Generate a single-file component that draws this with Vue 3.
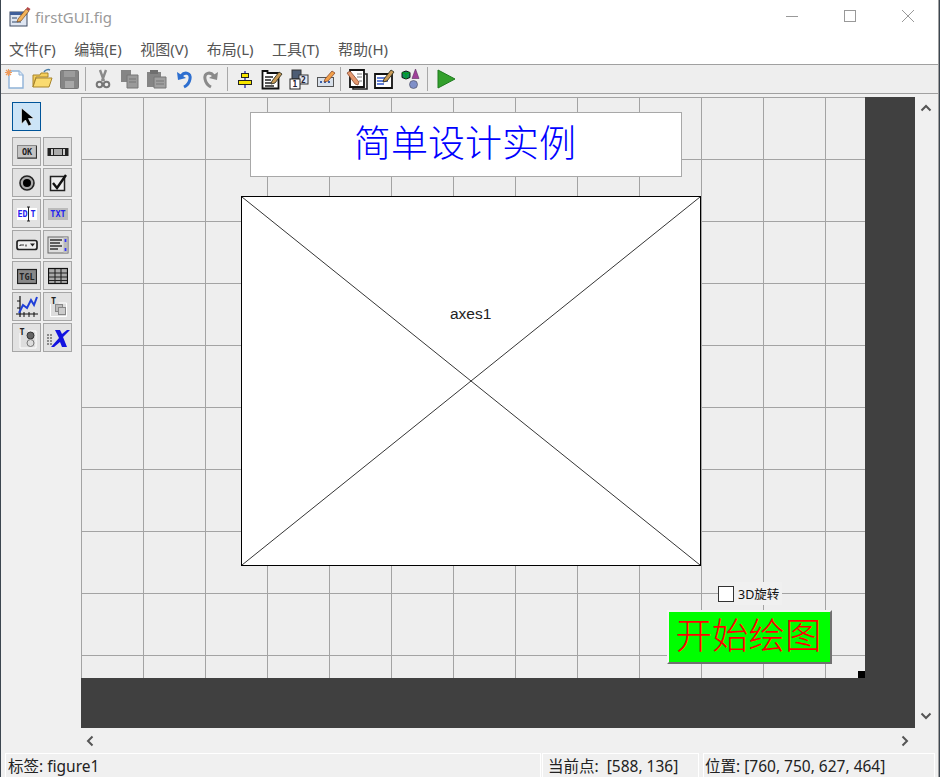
<template>
  <div class="window">
    <div class="titlebar">
      <svg class="app-icon" width="22" height="22" viewBox="0 0 22 22">
        <rect x="1" y="6" width="17" height="14" fill="#dfe6f2" stroke="#3d4a63" />
        <rect x="1" y="6" width="17" height="3" fill="#3f5f9a" />
        <rect x="3" y="11" width="5" height="2" fill="#8796ad" />
        <rect x="3" y="15" width="9" height="2" fill="#8796ad" />
        <path d="M9 13l8-10 3 2-8 10-4 1z" fill="#f2b35a" stroke="#7a4a20" stroke-width="0.7" />
        <path d="M17 3l1.500-2 3 2-1.500 2z" fill="#b5484a" />
      </svg>
      <span class="title">firstGUI.fig</span>
      <div class="win-buttons">
        <svg width="14" height="14" viewBox="0 0 14 14"><path d="M1 7.500h12" stroke="#999" /></svg>
        <svg width="14" height="14" viewBox="0 0 14 14"><rect x="1.500" y="1.500" width="11" height="11" fill="none" stroke="#999" /></svg>
        <svg width="14" height="14" viewBox="0 0 14 14"><path d="M1 1l12 12M13 1L1 13" stroke="#999" /></svg>
      </div>
    </div>

    <div class="menubar">
      <span v-for="m in menus" :key="m">{{ m }}</span>
    </div>

    <div class="toolbar">
      <div class="tool"><svg width="22" height="22" viewBox="0 0 22 22">
        <path d="M5 3h10l4 4v13H5z" fill="#fff" stroke="#8fb2d8" stroke-width="1.400" />
        <path d="M15 3v4h4" fill="#dbe8f5" stroke="#8fb2d8" />
        <path d="M4.500 1v7M1 4.500h7M2 2l5 5M7 2L2 7" stroke="#ef9a5a" stroke-width="1.200" />
      </svg></div>
      <div class="tool"><svg width="22" height="22" viewBox="0 0 22 22">
        <path d="M2 7h7l1-2h7v4H5l-3 10z" fill="#f5cf5c" stroke="#a8842a" />
        <path d="M2 19l3-9h16l-3 9z" fill="#fadb70" stroke="#a8842a" />
        <path d="M13 4c1-2 4-3 6-2" fill="none" stroke="#4a7ea8" stroke-width="1.500" />
      </svg></div>
      <div class="tool"><svg width="22" height="22" viewBox="0 0 22 22">
        <rect x="2.500" y="2.500" width="18" height="18" rx="1" fill="#858585" stroke="#777" />
        <rect x="6" y="3" width="11" height="6" fill="#9c9c9c" />
        <rect x="7" y="13" width="9" height="7" fill="#a8a8a8" />
      </svg></div>
      <div class="tool-sep"></div>
      <div class="tool"><svg width="22" height="22" viewBox="0 0 22 22">
        <path d="M8 2l4 11M14 2l-4 11" stroke="#8a8a8a" stroke-width="2.400" />
        <circle cx="7.500" cy="16.500" r="2.800" fill="none" stroke="#777" stroke-width="2" />
        <circle cx="14.500" cy="16.500" r="2.800" fill="none" stroke="#777" stroke-width="2" />
      </svg></div>
      <div class="tool"><svg width="22" height="22" viewBox="0 0 22 22">
        <path d="M2 2h10v12H2z" fill="#858585" />
        <path d="M8 7h11v13H8z" fill="#9a9a9a" stroke="#777" />
        <path d="M10 11h7M10 14h7" stroke="#777" />
      </svg></div>
      <div class="tool"><svg width="22" height="22" viewBox="0 0 22 22">
        <path d="M1 4h14v15H1z" fill="#858585" />
        <rect x="4" y="2" width="8" height="4" fill="#6f6f6f" />
        <path d="M8 9h12v11H8z" fill="#a0a0a0" stroke="#777" />
        <path d="M10 13h8M10 16h8" stroke="#777" />
      </svg></div>
      <div class="tool"><svg width="22" height="22" viewBox="0 0 22 22">
        <path d="M8 8c4-5 10-3 9 3-.5 3-2 6-6 8" fill="none" stroke="#2d6fd0" stroke-width="3" />
        <path d="M4 4l1 8 8-2z" fill="#2d6fd0" />
      </svg></div>
      <div class="tool"><svg width="22" height="22" viewBox="0 0 22 22">
        <path d="M14 8c-4-5-10-3-9 3 .5 3 2 6 6 8" fill="none" stroke="#8a8a8a" stroke-width="3" />
        <path d="M18 4l-1 8-8-2z" fill="#8a8a8a" />
      </svg></div>
      <div class="tool-sep"></div>
      <div class="tool"><svg width="22" height="22" viewBox="0 0 22 22">
        <path d="M11 3v17" stroke="#2222aa" stroke-width="1.300" />
        <rect x="7.500" y="5.500" width="7" height="4" fill="#f5e400" stroke="#222" />
        <rect x="4.500" y="12.500" width="13" height="4" fill="#f5e400" stroke="#222" />
      </svg></div>
      <div class="tool"><svg width="22" height="22" viewBox="0 0 22 22">
        <path d="M1.500 3h5v2h11v15.500h-16z" fill="#fff" stroke="#111" stroke-width="1.800" />
        <path d="M4 9h8M4 12h6M4 15h6M4 18h9" stroke="#222" stroke-width="1.500" />
        <path d="M11 13l7-9 3 2-7 9-4 1z" fill="#c99a55" stroke="#332" stroke-width="0.900" />
      </svg></div>
      <div class="tool"><svg width="22" height="22" viewBox="0 0 22 22">
        <rect x="4" y="2" width="9" height="9" fill="#4d5d74" stroke="#333" />
        <rect x="11" y="7" width="9" height="9" fill="#dfe6f4" stroke="#333" />
        <rect x="2" y="11" width="10" height="10" fill="#fff" stroke="#222" />
        <text x="7" y="19" class="tiny-num">1</text>
        <text x="15.500" y="14.500" class="tiny-num">2</text>
      </svg></div>
      <div class="tool"><svg width="22" height="22" viewBox="0 0 22 22">
        <rect x="2.500" y="9.500" width="16" height="9" fill="#d8e0ea" stroke="#555" />
        <path d="M5 14h2M9 14h2M13 14h2" stroke="#3a60a8" stroke-width="2" />
        <path d="M10 11l7-8 3 2-7 8-4 1z" fill="#f2a04a" stroke="#7a3a20" stroke-width="0.700" />
      </svg></div>
      <div class="tool-sep tight"></div>
      <div class="tool"><svg width="22" height="22" viewBox="0 0 22 22">
        <path d="M4 2h14v17H4z" fill="#fff" stroke="#111" stroke-width="1.800" />
        <path d="M19 6h2v15H7v-1" fill="none" stroke="#222" stroke-width="1.600" />
        <path d="M11 6h5M11 9h5M13 13h3" stroke="#777" />
        <path d="M1 5l3-2 9 11-1 3-3-1z" fill="#e59a70" stroke="#7a3a20" stroke-width="0.700" />
      </svg></div>
      <div class="tool"><svg width="22" height="22" viewBox="0 0 22 22">
        <path d="M2 6h17v14H2z" fill="#fff" stroke="#111" stroke-width="1.800" />
        <path d="M4 10h9M4 13h11M4 16h7" stroke="#2f56c8" stroke-width="1.500" />
        <path d="M11 11l7-9 3 2-7 9-4 1z" fill="#c99a55" stroke="#332" stroke-width="0.900" />
      </svg></div>
      <div class="tool"><svg width="22" height="22" viewBox="0 0 22 22">
        <path d="M2 4.500l4-1.500 4 1.500v5l-4 1.500-4-1.500z" fill="#0f8f5a" stroke="#111" />
        <path d="M6 6v5M2 4.500l4 1.500 4-1.500" stroke="#0a0" stroke-width="0.800" fill="none" />
        <path d="M15.500 1l3.500 9.500h-7z" fill="#a0409a" stroke="#5a2a60" stroke-width="0.600" />
        <circle cx="13.500" cy="16.500" r="4" fill="#7f8fc8" stroke="#445" stroke-width="0.600" />
      </svg></div>
      <div class="tool-sep"></div>
      <div class="tool"><svg width="22" height="22" viewBox="0 0 22 22">
        <path d="M4 2L21 11 4 20z" fill="#33a02c" stroke="#1f7a1f" />
      </svg></div>
    </div>

    <div class="main">
      <div class="palette">
        <div class="pal-btn selected"><svg width="20" height="20" viewBox="0 0 20 20">
          <path d="M4.500 1v16l4-4 3 6 3-1.500-3-6h5.500z" fill="#000" stroke="#fff" stroke-width="0.600" />
        </svg></div>
        <div class="pal-grid">
          <div class="pal-btn"><svg width="20" height="20" viewBox="0 0 20 20">
            <rect x="0.500" y="3.500" width="19" height="13" fill="#c4c4c4" stroke="#888" />
            <path d="M1 16h18.500v-12" fill="none" stroke="#333" stroke-width="1.200" />
            <text x="10" y="13" class="pix dark">OK</text>
          </svg></div>
          <div class="pal-btn"><svg width="22" height="20" viewBox="0 0 22 20">
            <rect x="0.500" y="6" width="21" height="8" fill="#222" />
            <rect x="4" y="7" width="2" height="6" fill="#ccc" />
            <rect x="7" y="7" width="8" height="6" fill="#aaa" />
            <rect x="16" y="7" width="2" height="6" fill="#ccc" />
          </svg></div>
          <div class="pal-btn"><svg width="20" height="20" viewBox="0 0 20 20">
            <circle cx="10" cy="10" r="7" fill="#aaa" stroke="#222" stroke-width="1.600" />
            <circle cx="10" cy="10" r="4" fill="#000" />
          </svg></div>
          <div class="pal-btn"><svg width="20" height="20" viewBox="0 0 20 20">
            <rect x="2.500" y="3.500" width="14" height="14" fill="#eee" stroke="#222" stroke-width="1.500" />
            <path d="M5 10l4 5 9-13" fill="none" stroke="#111" stroke-width="2.400" />
          </svg></div>
          <div class="pal-btn"><svg width="22" height="20" viewBox="0 0 22 20">
            <rect x="1" y="4" width="20" height="12" fill="#fff" />
            <text x="6.500" y="13" class="pix blue">ED</text>
            <text x="17" y="13" class="pix blue">T</text>
            <path d="M12.500 3v14M11 3h3M11 17h3" stroke="#222" />
          </svg></div>
          <div class="pal-btn"><svg width="22" height="20" viewBox="0 0 22 20">
            <rect x="1" y="4" width="20" height="12" fill="#bbb" />
            <text x="11" y="13" class="pix blue">TXT</text>
          </svg></div>
          <div class="pal-btn"><svg width="22" height="20" viewBox="0 0 22 20">
            <rect x="1" y="5.500" width="20" height="9" rx="2" fill="#eee" stroke="#222" stroke-width="1.700" />
            <path d="M4 10h4M4 10v1M10 11.500v-2" stroke="#333" stroke-width="1.200" />
            <path d="M14 8.500h5l-2.500 3z" fill="#222" />
          </svg></div>
          <div class="pal-btn"><svg width="22" height="22" viewBox="0 0 22 22">
            <rect x="1" y="3" width="20" height="16" fill="#ddd" stroke="#666" />
            <path d="M3 6h12M3 9h10M3 12h12M3 15h8" stroke="#333" stroke-width="1.600" />
            <rect x="16.500" y="3" width="4" height="16" fill="#bbb" />
            <path d="M18.500 5v3M18.500 14v3" stroke="#33f" stroke-width="1.700" />
          </svg></div>
          <div class="pal-btn"><svg width="20" height="20" viewBox="0 0 20 20">
            <rect x="0.500" y="3.500" width="19" height="14" fill="#888" stroke="#222" stroke-width="1.200" />
            <text x="10" y="13.500" class="pix dark">TGL</text>
          </svg></div>
          <div class="pal-btn"><svg width="20" height="20" viewBox="0 0 20 20">
            <rect x="0.500" y="2.500" width="19" height="15" fill="#aaa" stroke="#111" stroke-width="1.200" />
            <path d="M1 7h18M1 11h18M1 14.500h18M7 3v14M13 3v14" stroke="#222" stroke-width="1.100" />
          </svg></div>
          <div class="pal-btn"><svg width="24" height="24" viewBox="0 0 24 24">
            <path d="M5 1v21M1 19h22" stroke="#111" stroke-width="1.200" />
            <path d="M2 6h3M2 13h3M9 17v5M14 17v5M19 17v5" stroke="#111" />
            <path d="M4 18l4-8 4 3 4-8 3 5 3-8" fill="none" stroke="#1f3fd8" stroke-width="2" />
          </svg></div>
          <div class="pal-btn"><svg width="22" height="22" viewBox="0 0 22 22">
            <path d="M3.500 8v12.500h16V7h-8" fill="#ddd" stroke="#fff" />
            <text x="6.500" y="8" class="pix dark">T</text>
            <rect x="8.500" y="8.500" width="7" height="7" fill="#bbb" stroke="#888" />
            <rect x="11.500" y="11.500" width="7" height="7" fill="#ccc" stroke="#888" />
          </svg></div>
          <div class="pal-btn"><svg width="22" height="22" viewBox="0 0 22 22">
            <path d="M4 6v15h16V4h-8" fill="#ddd" stroke="#fff" />
            <text x="6" y="8" class="pix dark">T</text>
            <circle cx="14.500" cy="8.500" r="3.500" fill="#666" stroke="#333" />
            <circle cx="14.500" cy="16" r="3.500" fill="#ddd" stroke="#777" />
          </svg></div>
          <div class="pal-btn"><svg width="24" height="22" viewBox="0 0 24 22">
            <path d="M1 8h6M1 11h6M1 14h6M1 17h6" stroke="#333" stroke-dasharray="2 1" />
            <path d="M9 3h5l2 4 5-4h3l-7 7 4 10h-5l-2-5-6 5H5l8-9z" fill="#1212e0" />
          </svg></div>
        </div>
      </div>

      <div class="scroller">
        <div class="viewport">
          <div class="figure">
            <div class="static-title">简单设计实例</div>
            <div class="axes">
              <svg class="axes-x" width="458" height="368" viewBox="0 0 458 368">
                <path d="M0 0L458 368M458 0L0 368" stroke="#000" stroke-width="0.800" />
              </svg>
              <span class="axes-label">axes1</span>
            </div>
            <label class="check">
              <span class="check-box"></span>
              <span>3D旋转</span>
            </label>
            <div class="push">开始绘图</div>
            <div class="handle"></div>
          </div>
        </div>
        <div class="vscroll">
          <svg width="12" height="8" viewBox="0 0 12 8"><path d="M1.500 6.500L6 2l4.500 4.500" fill="none" stroke="#555" stroke-width="2" /></svg>
          <svg width="12" height="8" viewBox="0 0 12 8"><path d="M1.500 1.500L6 6l4.500-4.500" fill="none" stroke="#555" stroke-width="2" /></svg>
        </div>
        <div class="hscroll">
          <svg width="8" height="12" viewBox="0 0 8 12"><path d="M6.500 1.500L2 6l4.500 4.500" fill="none" stroke="#555" stroke-width="2" /></svg>
          <svg width="8" height="12" viewBox="0 0 8 12"><path d="M1.500 1.500L6 6l-4.500 4.500" fill="none" stroke="#555" stroke-width="2" /></svg>
        </div>
      </div>
    </div>

    <div class="statusbar">
      <div class="cell tag">标签: figure1</div>
      <div class="cell point">当前点:&nbsp; [588, 136]</div>
      <div class="cell pos">位置: [760, 750, 627, 464]</div>
    </div>
  </div>
</template>

<script setup>
const menus = ['文件(F)', '编辑(E)', '视图(V)', '布局(L)', '工具(T)', '帮助(H)']
</script>

<style>
html, body {
  background: #3c4650;
}
</style>

<style scoped>
.window {
  width: 937px;
  height: 777px;
  margin-left: 1px;
  background: #f0f0f0;
  display: flex;
  flex-direction: column;
  overflow: hidden;
  font-family: "Noto Sans", "Noto Sans CJK SC", sans-serif;
  border-right: 1px solid #a0a0a0;
}
.titlebar {
  height: 33px;
  background: #fff;
  display: flex;
  align-items: center;
  padding-left: 8px;
}
.app-icon {
  margin-right: 4px;
}
.title {
  font-size: 15px;
  color: #9a9a9a;
}
.win-buttons {
  margin-left: auto;
  display: flex;
  gap: 44px;
  margin-right: 23px;
  margin-top: -2px;
}
.menubar {
  height: 31px;
  background: #fff;
  display: flex;
  align-items: center;
  gap: 18.500px;
  padding-left: 8px;
  font-size: 15px;
  color: #555;
  border-bottom: 1px solid #a0a0a0;
}
.toolbar {
  height: 28px;
  background: #eee;
  display: flex;
  align-items: center;
  border-bottom: 1px solid #a0a0a0;
}
.tool {
  width: 27px;
  height: 24px;
  display: flex;
  align-items: center;
  justify-content: center;
}
.tool-sep {
  width: 1px;
  height: 24px;
  margin: 0 3px;
  background: #a8a8a8;
}
.tool-sep.tight {
  margin: 0 2px 0 1px;
}
.main {
  flex: 1;
  display: flex;
  padding-top: 3px;
  min-height: 0;
}
.palette {
  width: 80px;
  padding: 5px 0 0 11px;
  box-sizing: border-box;
}
.pal-grid {
  display: grid;
  grid-template-columns: repeat(2, 29px);
  gap: 2px;
  margin-top: 6px;
}
.pal-btn {
  width: 29px;
  height: 29px;
  box-sizing: border-box;
  border: 1px solid #a6a6a6;
  background: #e2e2e2;
  display: flex;
  align-items: center;
  justify-content: center;
}
.pal-btn.selected {
  background: #cce4f7;
  border-color: #005499;
}
.pix {
  font-family: "DejaVu Sans Mono", monospace;
  font-size: 8.500px;
  font-weight: 700;
  text-anchor: middle;
}
.pix.dark {
  fill: #222;
}
.pix.blue {
  fill: #2222ee;
}
.tiny-num {
  font-family: "DejaVu Sans Mono", monospace;
  font-size: 8px;
  font-weight: 700;
  text-anchor: middle;
  fill: #223;
}
.scroller {
  flex: 1;
  display: grid;
  grid-template-columns: 834px 1fr;
  grid-template-rows: 631px 1fr;
}
.viewport {
  background: #404040;
  overflow: hidden;
}
.figure {
  position: relative;
  width: 784px;
  height: 581px;
  background-color: #eee;
  background-image:
    linear-gradient(#a3a3a3 1px, transparent 1px),
    linear-gradient(90deg, #a3a3a3 1px, transparent 1px);
  background-size: 62px 62px;
}
.static-title {
  position: absolute;
  left: 169px;
  top: 15px;
  width: 432px;
  height: 65px;
  box-sizing: border-box;
  border: 1px solid #a8a8a8;
  background: #fff;
  color: #0000ff;
  font-size: 37px;
  font-weight: 300;
  line-height: 60px;
  text-align: center;
  padding-right: 2px;
}
.axes {
  position: absolute;
  left: 160px;
  top: 99px;
  width: 460px;
  height: 370px;
  box-sizing: border-box;
  border: 1px solid #000;
  background: #fff;
}
.axes-x {
  display: block;
}
.axes-label {
  position: absolute;
  left: 208px;
  top: 108px;
  font-family: "Liberation Sans", sans-serif;
  font-size: 15.500px;
  color: #222;
}
.check {
  position: absolute;
  left: 637px;
  top: 485px;
  width: 64px;
  height: 23px;
  background: #f0f0f0;
  display: flex;
  align-items: center;
  gap: 4px;
  font-size: 12.500px;
  color: #111;
}
.check-box {
  width: 16px;
  height: 16px;
  box-sizing: border-box;
  border: 1px solid #333;
  background: #fff;
}
.push {
  position: absolute;
  left: 586px;
  top: 513px;
  width: 165px;
  height: 54px;
  box-sizing: border-box;
  background: #00ff00;
  border: 2px solid;
  border-color: #f4f4f4 #707070 #707070 #f4f4f4;
  color: #ff0000;
  font-size: 36.500px;
  font-weight: 300;
  line-height: 46px;
  text-align: center;
  padding-right: 2px;
}
.handle {
  position: absolute;
  right: 0;
  bottom: 0;
  width: 7px;
  height: 7px;
  background: #000;
}
.vscroll {
  display: flex;
  flex-direction: column;
  justify-content: space-between;
  align-items: center;
  padding: 7px 2px 8px 0;
}
.hscroll {
  grid-column: 1;
  display: flex;
  justify-content: space-between;
  align-items: center;
  padding: 0 6px 0 5px;
}
.statusbar {
  height: 24px;
  display: flex;
  padding-left: 4px;
  padding-right: 3px;
  font-size: 15.500px;
  color: #222;
}
.cell {
  box-sizing: border-box;
  border-top: 1px solid #fff;
  border-left: 1px solid #fff;
  border-right: 1px solid #fff;
  padding-left: 2px;
  line-height: 24px;
  white-space: nowrap;
}
.tag {
  width: 536px;
}
.point {
  width: 157px;
  margin-left: 1px;
  padding-left: 5px;
}
.pos {
  flex: 1;
  margin-left: 4px;
  padding-left: 1px;
}
</style>
